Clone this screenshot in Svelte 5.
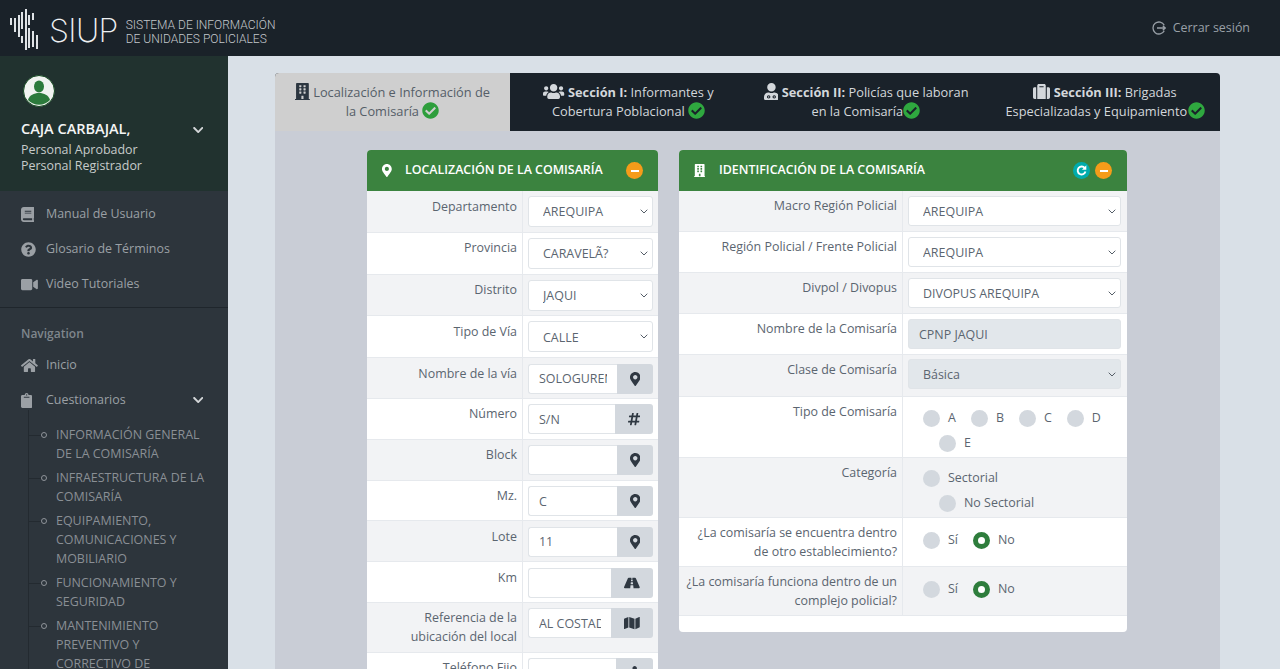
<script lang="ts">
  const icons = {
    marker: [384, 512, "M172.268 501.67C26.97 291.031 0 269.413 0 192 0 85.961 85.961 0 192 0s192 85.961 192 192c0 77.413-26.97 99.031-172.268 309.67-9.535 13.774-29.93 13.773-39.464 0zM192 272c44.183 0 80-35.817 80-80s-35.817-80-80-80-80 35.817-80 80 35.817 80 80 80z"],
    building: [448, 512, "M436 480h-20V24c0-13.255-10.745-24-24-24H56C42.745 0 32 10.745 32 24v456H12c-6.627 0-12 5.373-12 12v20h448v-20c0-6.627-5.373-12-12-12zM128 76c0-6.627 5.373-12 12-12h40c6.627 0 12 5.373 12 12v40c0 6.627-5.373 12-12 12h-40c-6.627 0-12-5.373-12-12V76zm0 96c0-6.627 5.373-12 12-12h40c6.627 0 12 5.373 12 12v40c0 6.627-5.373 12-12 12h-40c-6.627 0-12-5.373-12-12v-40zm52 148h-40c-6.627 0-12-5.373-12-12v-40c0-6.627 5.373-12 12-12h40c6.627 0 12 5.373 12 12v40c0 6.627-5.373 12-12 12zm76 160h-64v-84c0-6.627 5.373-12 12-12h40c6.627 0 12 5.373 12 12v84zm64-172c0 6.627-5.373 12-12 12h-40c-6.627 0-12-5.373-12-12v-40c0-6.627 5.373-12 12-12h40c6.627 0 12 5.373 12 12v40zm0-96c0 6.627-5.373 12-12 12h-40c-6.627 0-12-5.373-12-12v-40c0-6.627 5.373-12 12-12h40c6.627 0 12 5.373 12 12v40zm0-96c0 6.627-5.373 12-12 12h-40c-6.627 0-12-5.373-12-12V76c0-6.627 5.373-12 12-12h40c6.627 0 12 5.373 12 12v40z"],
    check: [512, 512, "M504 256c0 136.967-111.033 248-248 248S8 392.967 8 256 119.033 8 256 8s248 111.033 248 248zM227.314 387.314l184-184c6.248-6.248 6.248-16.379 0-22.627l-22.627-22.627c-6.248-6.249-16.379-6.249-22.628 0L216 308.118l-70.059-70.059c-6.248-6.248-16.379-6.248-22.628 0l-22.627 22.627c-6.248 6.248-6.248 16.379 0 22.627l104 104c6.249 6.25 16.379 6.25 22.628.001z"],
    users: [640, 512, "M96 224c35.3 0 64-28.7 64-64s-28.7-64-64-64-64 28.7-64 64 28.7 64 64 64zm448 0c35.3 0 64-28.7 64-64s-28.7-64-64-64-64 28.7-64 64 28.7 64 64 64zm32 32h-64c-17.6 0-33.5 7.1-45.1 18.6 40.3 22.1 68.9 62 75.1 109.4h66c17.7 0 32-14.3 32-32v-32c0-35.3-28.7-64-64-64zm-256 0c61.9 0 112-50.1 112-112S381.9 32 320 32 208 82.1 208 144s50.1 112 112 112zm76.8 32h-8.3c-20.8 10-43.9 16-68.5 16s-47.6-6-68.5-16h-8.3C179.6 288 128 339.6 128 403.2V432c0 26.5 21.5 48 48 48h288c26.5 0 48-21.5 48-48v-28.8c0-63.6-51.6-115.2-115.2-115.2zm-223.7-13.4C161.5 263.1 145.6 256 128 256H64c-35.3 0-64 28.7-64 64v32c0 17.7 14.3 32 32 32h65.9c6.3-47.4 34.9-87.3 75.2-109.4z"],
    officer: [448, 512, "M224 256c70.7 0 128-57.3 128-128S294.7 0 224 0 96 57.3 96 128s57.3 128 128 128zm89.6 32h-16.7c-22.2 10.2-46.9 16-72.9 16s-50.6-5.800-72.9-16h-16.7C60.2 288 0 348.2 0 422.4V464c0 26.5 21.5 48 48 48h352c26.5 0 48-21.5 48-48v-41.6c0-74.2-60.2-134.4-134.4-134.4zM140 370a50 50 0 1 0 .1 0zm168 0a50 50 0 1 0 .1 0zM140 402a18 18 0 1 1-.1 0zm168 0a18 18 0 1 1-.1 0z"],
    suitcase: [512, 512, "M128 480h256V80c0-26.5-21.5-48-48-48H176c-26.5 0-48 21.5-48 48v400zm64-384h128v32H192V96zm320 80v256c0 26.5-21.5 48-48 48h-48V128h48c26.5 0 48 21.5 48 48zM96 480H48c-26.5 0-48-21.5-48-48V176c0-26.5 21.5-48 48-48h48v352z"],
    book: [448, 512, "M448 360V24c0-13.3-10.7-24-24-24H96C43 0 0 43 0 96v320c0 53 43 96 96 96h328c13.3 0 24-10.7 24-24v-16c0-7.5-3.5-14.3-8.9-18.7-4.2-15.4-4.2-59.3 0-74.7 5.4-4.3 8.9-11.1 8.9-18.6zM128 134c0-3.3 2.7-6 6-6h212c3.3 0 6 2.7 6 6v20c0 3.3-2.7 6-6 6H134c-3.3 0-6-2.7-6-6v-20zm0 64c0-3.3 2.7-6 6-6h212c3.3 0 6 2.7 6 6v20c0 3.3-2.7 6-6 6H134c-3.3 0-6-2.7-6-6v-20zm253.4 250H96c-17.7 0-32-14.3-32-32 0-17.6 14.4-32 32-32h285.4c-1.9 17.1-1.9 46.9 0 64z"],
    question: [512, 512, "M504 256c0 136.997-111.043 248-248 248S8 392.997 8 256C8 119.083 119.043 8 256 8s248 111.083 248 248zM262.655 90c-54.497 0-89.255 22.957-116.549 63.758-3.536 5.286-2.353 12.415 2.715 16.258l34.699 26.31c5.205 3.947 12.621 3.008 16.665-2.122 17.864-22.658 30.113-35.797 57.303-35.797 20.429 0 45.698 13.148 45.698 32.958 0 14.976-12.363 22.667-32.534 33.976C247.128 238.528 216 254.941 216 296v4c0 6.627 5.373 12 12 12h56c6.627 0 12-5.373 12-12v-1.333c0-28.462 83.186-29.647 83.186-106.667 0-58.002-60.165-102-116.531-102zM256 338c-25.365 0-46 20.635-46 46 0 25.364 20.635 46 46 46s46-20.636 46-46c0-25.365-20.635-46-46-46z"],
    video: [576, 512, "M336.2 64H47.8C21.4 64 0 85.4 0 111.8v288.4C0 426.6 21.4 448 47.8 448h288.4c26.4 0 47.8-21.4 47.8-47.8V111.8c0-26.4-21.4-47.8-47.8-47.8zm189.4 37.7L416 177.3v157.4l109.6 75.5c21.2 14.6 50.4-.3 50.4-25.8V127.5c0-25.4-29.1-40.4-50.4-25.8z"],
    home: [576, 512, "M280.37 148.26L96 300.11V464a16 16 0 0 0 16 16l112.06-.29a16 16 0 0 0 15.92-16V368a16 16 0 0 1 16-16h64a16 16 0 0 1 16 16v95.64a16 16 0 0 0 16 16.05L464 480a16 16 0 0 0 16-16V300L295.67 148.26a12.19 12.19 0 0 0-15.3 0zM571.6 251.47L488 182.56V44.05a12 12 0 0 0-12-12h-56a12 12 0 0 0-12 12v72.61L318.47 43a48 48 0 0 0-61 0L4.34 251.47a12 12 0 0 0-1.6 16.9l25.5 31A12 12 0 0 0 45.15 301l235.22-193.74a12.19 12.19 0 0 1 15.3 0L530.9 301a12 12 0 0 0 16.9-1.6l25.5-31a12 12 0 0 0-1.7-16.93z"],
    clipboard: [384, 512, "M384 112v352c0 26.51-21.49 48-48 48H48c-26.51 0-48-21.49-48-48V112c0-26.51 21.49-48 48-48h80c0-35.29 28.71-64 64-64s64 28.71 64 64h80c26.51 0 48 21.49 48 48zM192 40c-13.255 0-24 10.745-24 24s10.745 24 24 24 24-10.745 24-24-10.745-24-24-24m96 114v-20a6 6 0 0 0-6-6H102a6 6 0 0 0-6 6v20a6 6 0 0 0 6 6h180a6 6 0 0 0 6-6z"],
    hash: [448, 512, "M440.667 182.109l7.143-40c1.313-7.355-4.342-14.109-11.813-14.109h-74.81l14.623-81.891C377.123 38.754 371.468 32 363.997 32h-40.632a12 12 0 0 0-11.813 9.891L296.175 128H197.54l14.623-81.891C213.477 38.754 207.822 32 200.35 32h-40.632a12 12 0 0 0-11.813 9.891L132.528 128H53.432a12 12 0 0 0-11.813 9.891l-7.143 40C33.163 185.246 38.818 192 46.289 192h74.81L98.242 320H19.146a12 12 0 0 0-11.813 9.891l-7.143 40C-1.123 377.246 4.532 384 12.003 384h74.81L72.19 465.891C70.877 473.246 76.532 480 84.003 480h40.632a12 12 0 0 0 11.813-9.891L151.826 384h98.634l-14.623 81.891C234.523 473.246 240.178 480 247.65 480h40.632a12 12 0 0 0 11.813-9.891L315.472 384h79.096a12 12 0 0 0 11.813-9.891l7.143-40c1.313-7.355-4.342-14.109-11.813-14.109h-74.81l22.857-128h79.096a12 12 0 0 0 11.813-9.891zM261.889 320h-98.634l22.857-128h98.634l-22.857 128z"],
    road: [576, 512, "M573.19 402.67l-139.79-320C428.43 71.29 417.6 64 405.68 64h-97.59l2.45 23.16c.5 4.72-3.21 8.84-7.96 8.84h-29.16c-4.75 0-8.46-4.12-7.96-8.84L267.91 64h-97.59c-11.93 0-22.76 7.29-27.73 18.67L2.8 402.67C-6.45 423.86 8.31 448 30.54 448h196.84l10.31-97.68c.86-8.14 7.72-14.32 15.91-14.32h68.8c8.19 0 15.05 6.18 15.91 14.32L348.62 448h196.84c22.23 0 36.99-24.14 27.73-45.33zM260.4 135.16a8 8 0 0 1 7.96-7.16h39.29c4.09 0 7.53 3.09 7.96 7.16l4.6 43.58c.75 7.09-4.81 13.26-11.93 13.26h-40.54c-7.13 0-12.68-6.17-11.93-13.26l4.6-43.58zM315.64 304h-55.29c-9.5 0-16.91-8.23-15.91-17.68l5.07-48c.86-8.14 7.72-14.32 15.91-14.32h45.15c8.19 0 15.05 6.18 15.91 14.32l5.07 48c1 9.45-6.41 17.68-15.91 17.68z"],
    map: [576, 512, "M0 117.66v346.32c0 11.32 11.43 19.06 21.94 14.86L160 416V32L20.12 87.95A32.006 32.006 0 0 0 0 117.66zM192 416l192 64V96L192 32v384zM554.06 33.16L416 96v384l139.88-55.95A31.996 31.996 0 0 0 576 394.34V48.02c0-11.32-11.43-19.06-21.94-14.86z"],
    phone: [416, 512, "M208 0c44 0 80 36 80 80v60c0 30-18 56-44 70v260c0 23-17 42-36 42s-36-19-36-42V210c-26-14-44-40-44-70V80c0-44 36-80 80-80z"],
    chevron: [448, 512, "M207.029 381.476L12.686 187.132c-9.373-9.373-9.373-24.569 0-33.941l22.667-22.667c9.357-9.357 24.522-9.375 33.901-.04L224 284.505l154.745-154.021c9.379-9.335 24.544-9.317 33.901.04l22.667 22.667c9.373 9.373 9.373 24.569 0 33.941L240.971 381.476c-9.373 9.372-24.569 9.372-33.942 0z"]
  };

  const logoBars = [
    [10, 18, 7], [14, 18, 14], [18, 15, 22], [21, 12, 17], [21, 36, 7], [25, 9, 41],
    [28, 15, 10], [28, 28, 20], [32, 13, 7], [32, 31, 16], [36, 35, 14]
  ];

  const quickLinks = [
    { icon: "book", label: "Manual de Usuario" },
    { icon: "question", label: "Glosario de Términos" },
    { icon: "video", label: "Video Tutoriales" }
  ];

  const subItems = [
    "INFORMACIÓN GENERAL DE LA COMISARÍA",
    "INFRAESTRUCTURA DE LA COMISARÍA",
    "EQUIPAMIENTO, COMUNICACIONES Y MOBILIARIO",
    "FUNCIONAMIENTO Y SEGURIDAD",
    "MANTENIMIENTO PREVENTIVO Y CORRECTIVO DE INFRAESTRUCTURA"
  ];

  const tabs = [
    { icon: "building", strong: "", text: "Localización e Información de la Comisaría", width: 235, active: true },
    { icon: "users", strong: "Sección I:", text: "Informantes y Cobertura Poblacional", width: 232 },
    { icon: "officer", strong: "Sección II:", text: "Policías que laboran en la Comisaría", width: 248, tight: true },
    { icon: "suitcase", strong: "Sección III:", text: "Brigadas Especializadas y Equipamiento", width: 230, tight: true }
  ];

  const locationRows = [
    { label: "Departamento", select: "AREQUIPA" },
    { label: "Provincia", select: "CARAVELÃ?" },
    { label: "Distrito", select: "JAQUI" },
    { label: "Tipo de Vía", select: "CALLE" },
    { label: "Nombre de la vía", value: "SOLOGUREN", addon: "marker" },
    { label: "Número", value: "S/N", addon: "hash" },
    { label: "Block", value: "", addon: "marker" },
    { label: "Mz.", value: "C", addon: "marker" },
    { label: "Lote", value: "11", addon: "marker" },
    { label: "Km", value: "", addon: "road" },
    { label: "Referencia de la ubicación del local", value: "AL COSTADO", addon: "map" },
    { label: "Teléfono Fijo", value: "S/N", addon: "phone" }
  ];

  const identityRows = [
    { label: "Macro Región Policial", select: "AREQUIPA" },
    { label: "Región Policial / Frente Policial", select: "AREQUIPA" },
    { label: "Divpol / Divopus", select: "DIVOPUS AREQUIPA" },
    { label: "Nombre de la Comisaría", value: "CPNP JAQUI", disabled: true },
    { label: "Clase de Comisaría", select: "Básica", disabled: true },
    { label: "Tipo de Comisaría", radios: ["A", "B", "C", "D", "E"], wrapFrom: 4 },
    { label: "Categoría", radios: ["Sectorial", "No Sectorial"], wrapFrom: 1 },
    { label: "¿La comisaría se encuentra dentro de otro establecimiento?", radios: ["Sí", "No"], checked: "No" },
    { label: "¿La comisaría funciona dentro de un complejo policial?", radios: ["Sí", "No"], checked: "No" }
  ];
</script>

{#snippet icon(name, size = 16)}
  {@const def = icons[name]}
  <svg class="icon" width={(def[0] / def[1]) * size} height={size} viewBox="0 0 {def[0]} {def[1]}" aria-hidden="true">
    <path d={def[2]} fill="currentColor" fill-rule="evenodd" />
  </svg>
{/snippet}

{#snippet formRows(rows)}
  {#each rows as row}
    <div class="row">
      <div class="row__label">{row.label}</div>
      <div class="row__field" class:row__field--addon={row.addon}>
        {#if row.select}
          <select class="control" disabled={row.disabled}><option>{row.select}</option></select>
        {:else if row.radios}
          <div class="radios" class:radios--single={row.checked}>
            {#each row.radios as option, i}
              <span class="radio" class:radio--wrapped={i === row.wrapFrom}>
                <span class="radio__dot" class:radio__dot--on={option === row.checked}></span>
                {option}
              </span>
              {#if i + 1 === row.wrapFrom}<span class="radios__break"></span>{/if}
            {/each}
          </div>
        {:else if row.addon}
          <div class="group">
            <input class="control group__input" value={row.value} readonly />
            <span class="group__addon">{@render icon(row.addon, 14)}</span>
          </div>
        {:else}
          <input class="control" value={row.value} disabled={row.disabled} readonly />
        {/if}
      </div>
    </div>
  {/each}
{/snippet}

<header class="topbar">
  <div class="brand">
    <svg class="brand__mark" width="40" height="46" viewBox="8 6 32 46" aria-hidden="true">
      {#each logoBars as bar}
        <rect x={bar[0]} y={bar[1]} width="2" height={bar[2]} fill="#dfe3e6" />
      {/each}
    </svg>
    <span class="brand__name">SIUP</span>
    <span class="brand__full">SISTEMA DE INFORMACIÓN<br />DE UNIDADES POLICIALES</span>
  </div>
  <a class="logout" href="#top">
    <svg width="14" height="14" viewBox="0 0 14 14" aria-hidden="true">
      <path d="M12.3 4.2A6 6 0 1 0 12.3 9.8" fill="none" stroke="currentColor" stroke-width="1.3" />
      <path d="M5 7h8.2M10.8 4.8 13.2 7l-2.4 2.2" fill="none" stroke="currentColor" stroke-width="1.3" />
    </svg>
    Cerrar sesión
  </a>
</header>

<div class="layout">
  <aside class="sidebar">
    <section class="profile">
      <svg class="profile__avatar" width="32" height="32" viewBox="0 0 32 32" aria-hidden="true">
        <circle cx="16" cy="16" r="15.5" fill="#f1f3f1" stroke="#164a22" />
        <ellipse cx="16" cy="11.5" rx="5" ry="6" fill="#2c7a3c" />
        <path d="M5 25c1.5-5 6-7 11-7s9.500 2 11 7a15 15 0 0 1-22 0z" fill="#2c7a3c" />
      </svg>
      <div class="profile__name">
        CAJA CARBAJAL,
        <span class="chevron">{@render icon("chevron", 12)}</span>
      </div>
      <div class="profile__role">Personal Aprobador</div>
      <div class="profile__role">Personal Registrador</div>
    </section>

    <nav class="quick">
      {#each quickLinks as link}
        <a class="nav-item" href="#top">
          <span class="nav-item__icon">{@render icon(link.icon, 15)}</span>
          {link.label}
        </a>
      {/each}
    </nav>

    <div class="nav-title">Navigation</div>
    <a class="nav-item" href="#top">
      <span class="nav-item__icon">{@render icon("home", 15)}</span>
      Inicio
    </a>
    <a class="nav-item" href="#top">
      <span class="nav-item__icon">{@render icon("clipboard", 15)}</span>
      Cuestionarios
      <span class="chevron">{@render icon("chevron", 12)}</span>
    </a>
    <ul class="subnav">
      {#each subItems as item}
        <li class="subnav__item">{item}</li>
      {/each}
    </ul>
  </aside>

  <main class="content">
    <div class="sheet">
      <div class="tabs">
        {#each tabs as tab}
          <div class="tab" class:tab--active={tab.active} class:tab--tight={tab.tight} style="width: {tab.width}px">
            <span class="tab__lead">{@render icon(tab.icon, 17)}</span>
            {#if tab.strong}<strong>{tab.strong}</strong>{/if}
            {tab.text}
            <span class="tab__ok">{@render icon("check", 17)}</span>
          </div>
        {/each}
      </div>

      <div class="panels">
        <section class="panel panel--location">
          <h2 class="panel__head">
            <span class="panel__icon">{@render icon("marker", 13)}</span>
            LOCALIZACIÓN DE LA COMISARÍA
            <span class="panel__tools"><span class="tool tool--minus"></span></span>
          </h2>
          {@render formRows(locationRows)}
        </section>

        <section class="panel panel--identity">
          <h2 class="panel__head">
            <span class="panel__icon">{@render icon("building", 13)}</span>
            IDENTIFICACIÓN DE LA COMISARÍA
            <span class="panel__tools">
              <span class="tool tool--reload">
                <svg width="11" height="11" viewBox="0 0 10 10" aria-hidden="true">
                  <path d="M8 2.800A3.600 3.600 0 1 0 8.600 6" fill="none" stroke="#fff" stroke-width="1.700" />
                  <path d="M9.400 0.300V4.300H5.400z" fill="#fff" />
                </svg>
              </span>
              <span class="tool tool--minus"></span>
            </span>
          </h2>
          {@render formRows(identityRows)}
        </section>
      </div>
    </div>
  </main>
</div>

<style>
  :global(html), :global(body) {
    margin: 0;
    height: 100%;
    overflow: hidden;
  }

  :global(#app) {
    font-family: "Open Sans", "Liberation Sans", sans-serif;
    font-size: 12.45px;
    line-height: 18.6px;
    color: #5b6570;
    background: #d9e0e7;
    height: 100vh;
    overflow: hidden;
    display: flex;
    flex-direction: column;
  }

  .icon {
    display: inline-block;
    vertical-align: -2px;
    flex: none;
  }

  .topbar {
    flex: none;
    height: 56px;
    box-sizing: border-box;
    background: #1a2229;
    display: flex;
    align-items: center;
    justify-content: space-between;
    padding: 0 30px 0 4px;
  }

  .brand {
    display: flex;
    align-items: center;
    color: #d5d9dc;
  }

  .brand__mark {
    margin: 2px 5px 0 0;
  }

  .brand__name {
    font-family: Inter, sans-serif;
    font-weight: 200;
    font-size: 32px;
    line-height: 1;
    color: #eef0f2;
    letter-spacing: -0.6px;
    margin: 5px 8px 0 0;
  }

  .brand__full {
    font-family: "Roboto", sans-serif;
    font-weight: 300;
    font-size: 12px;
    line-height: 14px;
    color: #c3c8cc;
    margin-top: 7px;
  }

  .logout {
    display: flex;
    align-items: center;
    gap: 7px;
    color: #99a0a7;
    text-decoration: none;
  }

  .layout {
    flex: 1;
    min-height: 0;
    display: flex;
  }

  .sidebar {
    flex: none;
    width: 228px;
    background: #2d353c;
    color: #9ba0a5;
    overflow: hidden;
  }

  .profile {
    height: 135px;
    box-sizing: border-box;
    padding: 19px 21px 0;
    background: #21322f;
    color: #c6cbca;
  }

  .profile__avatar {
    display: block;
    margin: 0 0 12px 2px;
  }

  .profile__name {
    display: flex;
    justify-content: space-between;
    align-items: center;
    font-size: 14.5px;
    font-weight: 600;
    color: #f4f5f5;
    margin-bottom: 4px;
    line-height: 19px;
  }

  .profile__role {
    line-height: 16px;
  }

  .chevron {
    margin-left: auto;
    color: #d3d6d8;
    padding-right: 4px;
  }

  .quick {
    padding: 6px 0 5px;
    border-bottom: 1px solid #1f262c;
  }

  .nav-item {
    display: flex;
    align-items: center;
    height: 35px;
    padding: 0 21px;
    color: inherit;
    text-decoration: none;
  }

  .nav-item__icon {
    width: 25px;
    flex: none;
    display: flex;
  }

  .nav-title {
    padding: 17px 21px 5px;
    font-size: 12px;
    font-weight: 600;
    color: #7f868c;
    line-height: 18px;
  }

  .subnav {
    list-style: none;
    margin: 0;
    padding: 8px 0 0 28px;
    position: relative;
  }

  .subnav::before {
    content: "";
    position: absolute;
    left: 28px;
    top: -8px;
    bottom: 0;
    width: 1px;
    background: #232a30;
  }

  .subnav__item {
    position: relative;
    padding: 0 18px 6px 28px;
    color: #8a8f95;
  }

  /* tree branch and the hollow bullet on it */
  .subnav__item::before {
    content: "";
    position: absolute;
    left: 0;
    top: 9px;
    width: 13px;
    height: 1px;
    background: #232a30;
  }

  .subnav__item::after {
    content: "";
    position: absolute;
    left: 13px;
    top: 6px;
    width: 4px;
    height: 4px;
    border: 1px solid #8e9399;
    border-radius: 50%;
  }

  .content {
    flex: 1;
    min-width: 0;
    padding: 17px 60px 0 47px;
  }

  .sheet {
    background: #c9cdd6;
    min-height: 100%;
    border-radius: 4px 4px 0 0;
    overflow: hidden;
  }

  .tabs {
    display: flex;
    background: #1a222a;
    height: 58px;
  }

  .tab {
    box-sizing: border-box;
    flex: none;
    padding: 10px 18px 0;
    text-align: center;
    font-size: 12.8px;
    color: #d3d7db;
    line-height: 19px;
  }

  .tab:nth-child(2) {
    padding: 10px 15px 0 20px;
  }

  .tab:last-child {
    padding: 10px 8px 0;
  }

  .tab strong {
    font-weight: 700;
  }

  .tab--active {
    background: #cfcfcf;
    color: #555e68;
    padding: 10px 16px 0;
  }

  .tab--active .tab__lead {
    color: #2c3640;
  }

  .tab__lead .icon,
  .tab__ok .icon {
    vertical-align: -3px;
  }

  .tab__ok {
    color: #2fa83f;
  }

  .tab--active .tab__ok {
    color: #2e9e3c;
  }

  .tab--tight .tab__ok {
    margin-left: -3px;
  }

  .panels {
    display: flex;
    align-items: flex-start;
    gap: 21px;
    padding: 19px 0 0 92px;
  }

  .panel {
    flex: none;
    background: #fff;
    border-radius: 4px;
    overflow: hidden;
    padding-bottom: 16px;
  }

  .panel--location {
    width: 291px;
  }

  .panel--identity {
    width: 448px;
  }

  .panel__head {
    margin: 0;
    height: 41px;
    box-sizing: border-box;
    background: #3b833f;
    color: #fff;
    font-size: 12.4px;
    font-weight: 600;
    display: flex;
    align-items: center;
    padding: 0 15px;
  }

  .panel__icon {
    width: 25px;
    flex: none;
    display: flex;
  }

  .panel--location .panel__icon {
    width: 23px;
  }

  .panel__tools {
    margin-left: auto;
    display: flex;
    gap: 5px;
  }

  .tool {
    width: 17px;
    height: 17px;
    border-radius: 50%;
    display: flex;
    align-items: center;
    justify-content: center;
  }

  .tool--minus {
    background: #f59c1a;
  }

  .tool--minus::before {
    content: "";
    width: 8px;
    height: 2px;
    background: #fff;
  }

  .tool--reload {
    background: #00acac;
  }

  .row {
    display: flex;
    border-bottom: 1px solid #e6e9ed;
  }

  .row:nth-of-type(odd) {
    background: #f2f3f5;
  }

  .row__label {
    box-sizing: border-box;
    padding: 6px 5px 5px 6px;
    text-align: right;
    border-right: 1px solid #e6e9ed;
  }

  .row__field {
    box-sizing: border-box;
    padding: 5px 5px 4.8px;
    flex: 1;
    min-width: 0;
  }

  .row__field--addon {
    padding: 5.5px 5px 4.3px;
  }

  .panel--location .row__label {
    width: 156px;
    padding-top: 6.5px;
  }

  .panel--identity .row__label {
    width: 224px;
  }

  .panel--identity .row__field {
    padding: 5px 6px 5px 5px;
  }

  .control {
    box-sizing: border-box;
    display: block;
    width: 100%;
    height: 30px;
    font: inherit;
    color: #5b6570;
    background: #fff;
    border: 1px solid #e0e4e8;
    border-radius: 3px;
    padding: 0 10px;
    outline: none;
  }

  select.control {
    appearance: none;
    padding: 2px 16px 0 14px;
    background: #fff url("data:image/svg+xml,%3Csvg xmlns='http://www.w3.org/2000/svg' width='8' height='5'%3E%3Cpath d='M.7.7 4 4l3.300-3.300' fill='none' stroke='%23555e68'/%3E%3C/svg%3E") no-repeat right 4px center;
  }

  .panel--location select.control {
    height: 31px;
  }

  .control:disabled {
    background-color: #e2e7eb;
    opacity: 1;
  }

  .panel--identity select:disabled {
    margin: -1px 0 2px;
  }

  .group {
    display: flex;
    height: 30px;
  }

  .group__input {
    flex: 1;
    min-width: 0;
    border-right: 0;
    border-radius: 3px 0 0 3px;
  }

  .group__addon {
    flex: none;
    display: flex;
    align-items: center;
    padding: 0 13px;
    background: #d3d8de;
    color: #2f3842;
    border-radius: 0 3px 3px 0;
  }

  .radios {
    display: flex;
    flex-wrap: wrap;
    padding-top: 3.5px;
    margin-bottom: -4px;
  }

  .radios--single {
    padding-top: 4.5px;
    margin-bottom: 0;
  }

  .radios__break {
    flex-basis: 100%;
    height: 0;
  }

  .radio {
    display: inline-flex;
    align-items: center;
    gap: 8px;
    height: 25px;
    margin-left: 15px;
  }

  .radio--wrapped {
    margin-left: 31px;
  }

  .radio__dot {
    box-sizing: border-box;
    width: 17px;
    height: 17px;
    border-radius: 50%;
    background: #d3d8de;
  }

  .radio__dot--on {
    background: #fff;
    border: 5.5px solid #2e7d3c;
  }
</style>
